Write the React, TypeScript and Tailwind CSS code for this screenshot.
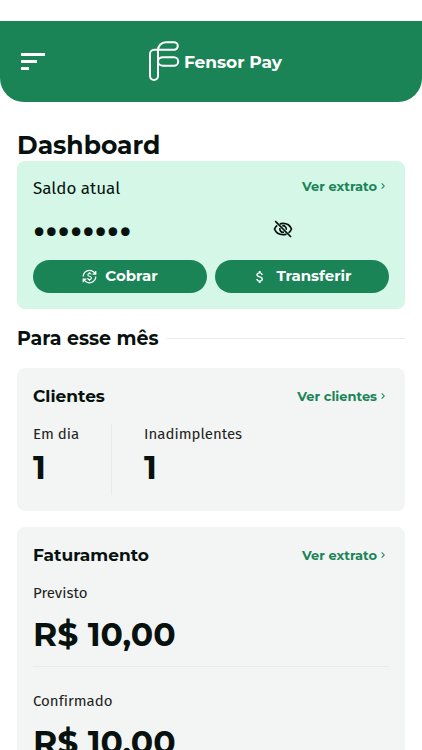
import type { ReactNode } from "react";
import { MdAttachMoney, MdChevronRight, MdCurrencyExchange } from "react-icons/md";

const heading = "font-['Montserrat','Inter',sans-serif]";
const copy = "font-['Fira_Sans','Noto_Sans',sans-serif] [font-variant-ligatures:none]";

function Logo() {
  return (
    <div className="flex items-center gap-1 pl-2 text-white">
      <svg
        className="h-[42px] w-8"
        viewBox="0 0 32 42"
        fill="none"
        stroke="currentColor"
        strokeWidth="2"
        aria-hidden="true"
      >
        <path d="M10 8.8H6.2A4.2 4.2 0 0 0 2 13v22a4 4 0 0 0 8 0V9A7.8 7.8 0 0 1 17.8 1.2H26a3.8 3.8 0 0 1 0 7.6H10" />
        <path d="M15 16.3h11a4.2 4.2 0 0 1 0 8.4H15c-2.8 0-5-1.8-5-4.2s2.2-4.2 5-4.2z" />
      </svg>
      <span className={`${heading} text-[17px] leading-6 font-bold`}>Fensor Pay</span>
    </div>
  );
}

function EyeOffIcon() {
  return (
    <svg
      className="size-5"
      viewBox="0 0 20 20"
      fill="none"
      stroke="currentColor"
      strokeWidth="1.7"
      aria-hidden="true"
    >
      <path d="M6.8 4.9C7.8 4.500 8.900 4.300 10 4.300c4.200 0 7.300 2.500 8.500 5.700-.6 1.500-1.600 2.800-2.900 3.800M13.500 15.100c-1.100.4-2.200.6-3.500.6-4.200 0-7.300-2.500-8.500-5.700.6-1.500 1.500-2.700 2.700-3.600" />
      <path d="M9.300 6.800A3.300 3.300 0 0 1 13.200 10.800M11 13.100A3.300 3.300 0 0 1 6.900 9.100" />
      <path d="M2.200 2.200l15.800 15.800" />
    </svg>
  );
}

function MoreLink({ children }: { children: ReactNode }) {
  return (
    <a
      href="#"
      className={`${heading} flex items-center text-[13px] leading-[18px] font-bold text-[#1a8456]`}
    >
      {children}
      <MdChevronRight className="size-3" aria-hidden="true" />
    </a>
  );
}

function ActionButton({ icon, children }: { icon: ReactNode; children: ReactNode }) {
  return (
    <button
      type="button"
      className={`${heading} flex h-[33px] flex-1 items-center justify-center gap-2 rounded-full bg-[#1a8456] text-[15px] font-bold text-white`}
    >
      {icon}
      {children}
    </button>
  );
}

function Card({ title, link, children }: { title: string; link: string; children: ReactNode }) {
  return (
    <section className="mb-4 rounded-lg bg-[#f3f5f4] p-4">
      <div className="flex items-center justify-between">
        <h3 className={`${heading} text-[17px] leading-6 font-bold`}>{title}</h3>
        <MoreLink>{link}</MoreLink>
      </div>
      {children}
    </section>
  );
}

function Amount({ label, value }: { label: string; value: string }) {
  return (
    <div>
      <dt className={`${copy} text-[15px] leading-5 text-[#1c2421]`}>{label}</dt>
      <dd className={`${heading} mt-2 text-[33px] leading-[47px] font-bold`}>{value}</dd>
    </div>
  );
}

function Count({ label, value }: { label: string; value: number }) {
  return (
    <div>
      <dt className={`${copy} text-[15px] leading-5 text-[#1c2421]`}>{label}</dt>
      <dd className={`${heading} pb-1 text-[33px] leading-[47px] font-bold`}>{value}</dd>
    </div>
  );
}

export default function App() {
  return (
    <div className="bg-white pt-[21px] text-[#07120e]">
      <header className="grid h-[81px] grid-cols-[1fr_auto_1fr] items-center rounded-b-3xl bg-[#1a8456] px-[21px]">
        <button type="button" aria-label="Menu" className="flex w-6 flex-col gap-1">
          <span className="h-[3px] w-6 bg-white" />
          <span className="h-[3px] w-4 bg-white" />
          <span className="h-[3px] w-2 bg-white" />
        </button>
        <Logo />
      </header>

      <main className="px-[17px] pt-7">
        <h1 className={`${heading} text-[25px] leading-[31px] font-bold`}>Dashboard</h1>

        <section className="rounded-lg bg-[#d4f7e7] p-4">
          <div className="flex items-start justify-between">
            <label htmlFor="saldo" className={`${copy} text-[17px] leading-6`}>
              Saldo atual
            </label>
            <MoreLink>Ver extrato</MoreLink>
          </div>
          <div className="mt-2 flex h-10 items-center">
            <input
              id="saldo"
              type="password"
              readOnly
              value="00000000"
              className={`${heading} w-60 bg-transparent text-[34px] leading-10 font-bold outline-none`}
            />
            <button type="button" aria-label="Mostrar saldo">
              <EyeOffIcon />
            </button>
          </div>
          <div className="mt-[11px] flex gap-2">
            <ActionButton icon={<MdCurrencyExchange className="size-[15px]" />}>
              Cobrar
            </ActionButton>
            <ActionButton icon={<MdAttachMoney className="size-4" />}>Transferir</ActionButton>
          </div>
        </section>

        <div className="my-4 flex items-center gap-2">
          <h2 className={`${heading} text-[19px] leading-[27px] font-bold`}>Para esse mês</h2>
          <div className="h-px flex-1 bg-[#e7ebe9]" />
        </div>

        <Card title="Clientes" link="Ver clientes">
          <dl className="mt-4 flex">
            <div className="border-r border-[#e7ebe9] pr-8">
              <Count label="Em dia" value={1} />
            </div>
            <div className="pl-8">
              <Count label="Inadimplentes" value={1} />
            </div>
          </dl>
        </Card>

        <Card title="Faturamento" link="Ver extrato">
          <dl className="mt-4">
            <Amount label="Previsto" value="R$ 10,00" />
            <div className="mt-2 mb-6 h-px bg-[#e7ebe9]" />
            <Amount label="Confirmado" value="R$ 10,00" />
          </dl>
        </Card>
      </main>
    </div>
  );
}
